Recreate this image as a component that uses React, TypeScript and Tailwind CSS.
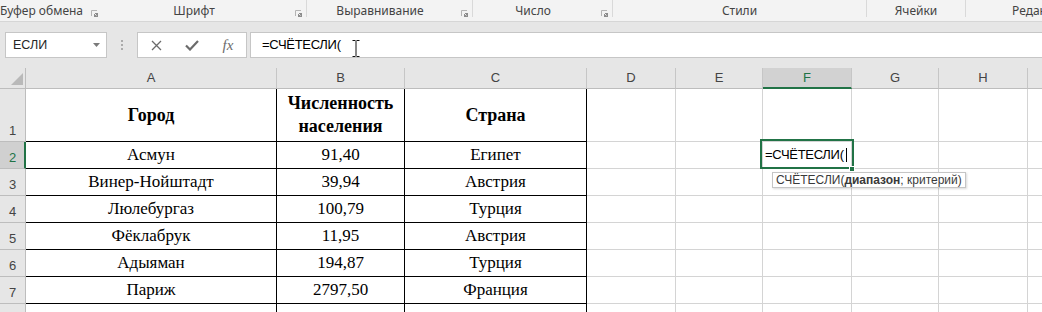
const colWidths = ['w-[251px]', 'w-[128px]', 'w-[182px]', 'w-[89px]', 'w-[87px]', 'w-[89px]', 'w-[87px]', 'w-[89px]'];
const colLetters = ['A', 'B', 'C', 'D', 'E', 'F', 'G', 'H'];

type Group = { label: string; width: string; launcher?: boolean };

const groups: Group[] = [
  { label: 'Буфер обмена', width: 'w-[101px]', launcher: true },
  { label: 'Шрифт', width: 'w-[206px]', launcher: true },
  { label: 'Выравнивание', width: 'w-[166px]', launcher: true },
  { label: 'Число', width: 'w-[140px]', launcher: true },
  { label: 'Стили', width: 'w-[254px]' },
  { label: 'Ячейки', width: 'w-[99px]' },
];

const rows = [
  ['Асмун', '91,40', 'Египет'],
  ['Винер-Нойштадт', '39,94', 'Австрия'],
  ['Люлебургаз', '100,79', 'Турция'],
  ['Фёклабрук', '11,95', 'Австрия'],
  ['Адыяман', '194,87', 'Турция'],
  ['Париж', '2797,50', 'Франция'],
  ['', '', ''],
];

const Launcher = () => (
  <svg width="7" height="7" viewBox="0 0 7 7">
    <path d="M0.5 6V0.5H6" fill="none" stroke="#b4b4b4" />
    <rect x="3" y="3" width="4" height="4" fill="#8c8c8c" />
    <path d="M3 3l2.5 2.5" stroke="#f3f3f3" />
  </svg>
);

const Ribbon = () => (
  <div className="flex h-[22px] border-b border-[#d6d6d6] bg-[#f3f3f3] [font-family:'Noto_Sans',sans-serif] text-[12px] text-[#444]">
    {groups.map((g) => (
      <div key={g.label} className={`flex h-full shrink-0 ${g.width}`}>
        <div className={`flex-1 whitespace-nowrap pt-[3px] text-center leading-[16px] ${g.launcher ? 'pr-[8px]' : ''}`}>
          {g.label}
        </div>
        {g.launcher && (
          <div className="mr-[4px] mt-[10px]">
            <Launcher />
          </div>
        )}
        <div className="h-[17px] w-px bg-[#d9d9d9]" />
      </div>
    ))}
    <div className="flex-1 overflow-hidden whitespace-nowrap pl-[46px] pt-[3px] leading-[16px]">Редактирование</div>
  </div>
);

const FormulaBar = () => (
  <div className="flex h-[46px] items-start overflow-hidden bg-[#e6e6e6] pt-[10px]">
    <div className="ml-[5px] flex h-[26px] w-[102px] shrink-0 items-center justify-between border border-[#c6c6c6] bg-white pl-[7px] pr-[6px] text-[12.5px] text-[#262626]">
      <span>ЕСЛИ</span>
      <svg width="7" height="4" viewBox="0 0 7 4">
        <path d="M0 0h7L3.5 4z" fill="#7a7a7a" />
      </svg>
    </div>
    <div className="flex h-[26px] w-[30px] shrink-0 flex-col items-center justify-center gap-[2px]">
      <span className="h-[2px] w-[2px] bg-[#ababab]" />
      <span className="h-[2px] w-[2px] bg-[#ababab]" />
      <span className="h-[2px] w-[2px] bg-[#ababab]" />
    </div>
    <div className="flex h-[26px] w-[110px] shrink-0 items-center border border-[#c6c6c6] bg-white">
      <div className="flex w-[36px] justify-center">
        <svg width="11" height="11" viewBox="0 0 11 11">
          <path d="M1 1l9 9M10 1l-9 9" stroke="#6b6b6b" strokeWidth="1.3" />
        </svg>
      </div>
      <div className="flex w-[36px] justify-center">
        <svg width="14" height="11" viewBox="0 0 14 11">
          <path d="M1 5.5l4 4L13 1" fill="none" stroke="#6b6b6b" strokeWidth="2.2" />
        </svg>
      </div>
      <div className="flex w-[36px] justify-center [font-family:'Liberation_Serif',serif] text-[15px] italic text-[#6b6b6b]">
        fx
      </div>
    </div>
    <div className="relative ml-[3px] flex h-[26px] w-[820px] shrink-0 items-center border border-[#c6c6c6] bg-white pl-[11px] text-[13px] tracking-[-0.3px] text-black">
      =СЧЁТЕСЛИ(
      <svg className="absolute left-[101px] top-[7px]" width="8" height="17" viewBox="0 0 8 17">
        <path d="M0.5 0.5h3M4.5 0.5h3M4 1v15M0.5 16.5h3M4.5 16.5h3" stroke="#111" fill="none" />
      </svg>
    </div>
  </div>
);

const HeaderRow = () => (
  <div className="flex h-[21px] bg-[#e6e6e6] text-[13px] text-[#444]">
    <div className="flex w-[26px] shrink-0 items-end justify-end border-r border-b border-[#bdbdbd] pr-[2px] pb-[3px]">
      <svg width="12" height="12" viewBox="0 0 12 12">
        <path d="M12 0v12H0z" fill="#b9b9b9" />
      </svg>
    </div>
    {colLetters.map((c, i) =>
      c === 'F' ? (
        <div
          key={c}
          className={`${colWidths[i]} flex shrink-0 items-center justify-center border-r border-b-2 border-r-[#c6c6c6] border-b-[#217346] bg-[#d2d2d2] text-[#217346]`}
        >
          {c}
        </div>
      ) : (
        <div
          key={c}
          className={`${colWidths[i]} flex shrink-0 items-center justify-center border-r border-b border-r-[#c6c6c6] border-b-[#bdbdbd]`}
        >
          {c}
        </div>
      )
    )}
    <div className="flex-1 border-b border-[#bdbdbd]" />
  </div>
);

const RowHeader = ({ n, selected }: { n: number | null; selected?: boolean }) =>
  selected ? (
    <div className="flex w-[26px] shrink-0 items-end justify-center border-r-2 border-b border-r-[#217346] border-b-[#bdbdbd] bg-[#d0d0d0] pb-[2px] pl-px text-[13px] leading-[16px] text-[#217346]">
      {n}
    </div>
  ) : (
    <div className="flex w-[26px] shrink-0 items-end justify-center border-r border-b border-[#bdbdbd] bg-[#e6e6e6] pb-[2px] text-[13px] leading-[16px] text-[#444]">
      {n}
    </div>
  );

const tableCell =
  "flex shrink-0 items-center justify-center border-r border-b border-black [font-family:'Liberation_Serif',serif] text-[17px] text-black";
const gridCell = 'shrink-0 border-r border-b border-[#d4d4d4]';

const ActiveCell = () => (
  <div className={`relative flex items-center pl-[2px] text-[13px] tracking-[-0.3px] text-black ${colWidths[5]} ${gridCell}`}>
    =СЧЁТЕСЛИ(
    <span className="ml-[2px] h-[14px] w-px bg-black" />
    <div className="absolute -left-[3px] -top-[3px] h-[30px] w-[94px] border-2 border-[#217346]" />
    <div className="absolute left-[86px] top-[24px] h-[6px] w-[6px] border border-white bg-[#217346]" />
    <div className="absolute left-[9px] top-[30px] z-10 flex h-[16px] items-center whitespace-nowrap border border-[#c5c5c5] bg-white px-[3px] text-[12px] tracking-normal text-[#3a3a3a] shadow-[1px_1px_2px_rgba(0,0,0,0.15)]">
      СЧЁТЕСЛИ(<b>диапазон</b>; критерий)
    </div>
  </div>
);

const Sheet = () => (
  <div>
    <HeaderRow />
    <div className="flex h-[53px]">
      <RowHeader n={1} />
      <div className={`${tableCell} ${colWidths[0]} text-[18px] font-bold`}>Город</div>
      <div className={`${tableCell} ${colWidths[1]} flex-col text-[18px] font-bold leading-[23px]`}>
        <span>Численность</span>
        <span>населения</span>
      </div>
      <div className={`${tableCell} ${colWidths[2]} text-[18px] font-bold`}>Страна</div>
      <div className={`${colWidths[3]} ${gridCell}`} />
      <div className={`${colWidths[4]} ${gridCell}`} />
      <div className={`${colWidths[5]} ${gridCell}`} />
      <div className={`${colWidths[6]} ${gridCell}`} />
      <div className={`${colWidths[7]} ${gridCell}`} />
      <div className="flex-1 border-b border-[#d4d4d4]" />
    </div>
    {rows.map((r, idx) => {
      const n = idx + 2;
      return (
        <div key={n} className="flex h-[27px]">
          <RowHeader n={n < 8 ? n : null} selected={n === 2} />
          {r.map((v, i) => (
            <div key={i} className={`${tableCell} ${colWidths[i]}`}>
              {v}
            </div>
          ))}
          <div className={`${colWidths[3]} ${gridCell}`} />
          <div className={`${colWidths[4]} ${gridCell}`} />
          {n === 2 ? <ActiveCell /> : <div className={`${colWidths[5]} ${gridCell}`} />}
          <div className={`${colWidths[6]} ${gridCell}`} />
          <div className={`${colWidths[7]} ${gridCell}`} />
          <div className="flex-1 border-b border-[#d4d4d4]" />
        </div>
      );
    })}
  </div>
);

export default function App() {
  return (
    <div className="h-[312px] w-[1042px] overflow-hidden bg-white [font-family:'Liberation_Sans',sans-serif]">
      <Ribbon />
      <FormulaBar />
      <Sheet />
    </div>
  );
}
